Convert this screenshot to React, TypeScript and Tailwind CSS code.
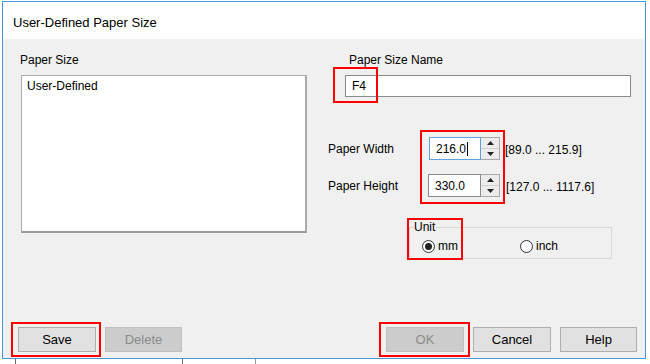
import React from "react";

const F = { fontFamily: '"Liberation Sans", Arial, sans-serif' };

function Spinner() {
  return (
    <div className="w-[19px] h-full border border-l-0 border-[#a8a8a8] bg-[#f4f4f4] flex flex-col">
      <div className="flex-1 flex items-center justify-center border-b border-[#d0d0d0] bg-[#ececec]">
        <svg width="7" height="4" viewBox="0 0 7 4"><path d="M0 4 L3.5 0 L7 4 Z" fill="#222" /></svg>
      </div>
      <div className="flex-1 flex items-center justify-center bg-[#ececec]">
        <svg width="7" height="4" viewBox="0 0 7 4"><path d="M0 0 L3.5 4 L7 0 Z" fill="#222" /></svg>
      </div>
    </div>
  );
}

function Btn({ label, disabled, w = "w-[78px]", red }: { label: string; disabled?: boolean; w?: string; red?: boolean }) {
  return (
    <div className={`relative ${w} h-[25px]`}>
      <div
        className={`w-full h-full flex items-center justify-center text-[13px] border ${
          disabled ? "bg-[#cccccc] border-[#bfbfbf] text-[#8a8a8a]" : "bg-[#e1e1e1] border-[#adadad] text-black"
        }`}
      >
        {label}
      </div>
      {red && <div className="absolute left-[-7px] top-[-5px] w-[91px] h-[35px] border-2 border-[#ff0000]" />}
    </div>
  );
}

export default function App() {
  return (
    <div className="w-[650px] h-[364px] bg-white overflow-hidden text-black" style={F}>
      <div className="pt-[1px] pl-[2px]">
        <div className="w-[644px] h-[358px] border border-[#4a96dc] flex flex-col">
          <div className="h-[37px] bg-white flex items-center pl-[10px] pt-[4px] text-[13px]">
            User-Defined Paper Size
          </div>
          <div className="flex-1 bg-[#f0f0f0] flex flex-col">
            <div className="flex-1 flex pt-[13px] text-[12px]">
              {/* Left column */}
              <div className="ml-[18px] w-[286px]">
                <div className="leading-[16px] h-[16px] -ml-[1px]">Paper Size</div>
                <div className="mt-[7px] h-[158px] bg-white border border-[#a9a9a9] border-b-2 border-r-2 border-b-[#9a9a9a] pl-[5px] pt-[2px] leading-[16px]">
                  User-Defined
                </div>
              </div>
              {/* Right column */}
              <div className="ml-[21px] flex-1">
                <div className="leading-[16px] h-[16px] pl-[21px]">Paper Size Name</div>
                <div className="relative mt-[7px] ml-[17px] w-[286px] h-[22px] bg-white border border-[#8a8a8a] flex items-center pl-[6px]">
                  F4
                  <div className="absolute left-[-13px] top-[-9px] w-[45px] h-[36px] border-2 border-[#ff0000]" />
                </div>

                <div className="relative mt-[40px]">
                  <div className="flex items-center h-[23px]">
                    <div className="w-[101px]">Paper Width</div>
                    <div className="w-[52px] h-full bg-white border border-[#5fa0e0] flex items-center pl-[6px]">
                      <span>216.0</span>
                      <span className="inline-block w-[1px] h-[14px] bg-black ml-[1px]" />
                    </div>
                    <Spinner />
                    <div className="ml-[5px] pt-[3px]">[89.0 ... 215.9]</div>
                  </div>
                  <div className="flex items-center h-[23px] mt-[14px]">
                    <div className="w-[100px]">Paper Height</div>
                    <div className="w-[53px] h-full bg-white border border-[#8a8a8a] flex items-center pl-[6px]">
                      330.0
                    </div>
                    <Spinner />
                    <div className="ml-[6px] pt-[3px]">[127.0 ... 1117.6]</div>
                  </div>
                  <div className="absolute left-[92px] top-[-7px] w-[85px] h-[74px] border-2 border-[#ff0000]" />
                </div>

                <div className="relative mt-[30px] ml-[81px] w-[203px] h-[32px] border border-[#d8d8d8]">
                  <div className="-mt-[8px] ml-[4px] w-fit leading-[14px] text-[12px] bg-[#f0f0f0] pr-[1px]">Unit</div>
                  <div className="flex items-center pt-[3px] pl-[12px]">
                    <div className="flex items-center w-[98px]">
                      <div className="w-[13px] h-[13px] rounded-full border border-[#333] bg-white flex items-center justify-center">
                        <div className="w-[7px] h-[7px] rounded-full bg-[#222]" />
                      </div>
                      <span className="ml-[3px]">mm</span>
                    </div>
                    <div className="flex items-center">
                      <div className="w-[13px] h-[13px] rounded-full border border-[#333] bg-white" />
                      <span className="ml-[3px]">inch</span>
                    </div>
                  </div>
                  <div className="absolute left-[-3px] top-[-10px] w-[56px] h-[42px] border-2 border-[#ff0000]" />
                </div>
              </div>
            </div>

            <div className="flex items-center pl-[15px] pr-[8px] pb-[6px]">
              <div className="relative">
                <Btn label="Save" />
                <div className="absolute left-[-7px] top-[-5px] w-[90px] h-[35px] border-2 border-[#ff0000]" />
              </div>
              <div className="ml-[9px]">
                <Btn label="Delete" disabled w="w-[77px]" />
              </div>
              <div className="flex-1" />
              <Btn label="OK" disabled red />
              <div className="ml-[9px]">
                <Btn label="Cancel" />
              </div>
              <div className="ml-[9px]">
                <Btn label="Help" w="w-[77px]" />
              </div>
            </div>
          </div>
        </div>
        <div className="h-[5px] flex">
          <div className="ml-[13px] w-[1px] h-full bg-[#6a6a6a]" />
          <div className="ml-[166px] w-[1px] h-full bg-[#6a6a6a]" />
          <div className="ml-[72px] w-[1px] h-full bg-[#9a9a9a]" />
        </div>
      </div>
    </div>
  );
}
